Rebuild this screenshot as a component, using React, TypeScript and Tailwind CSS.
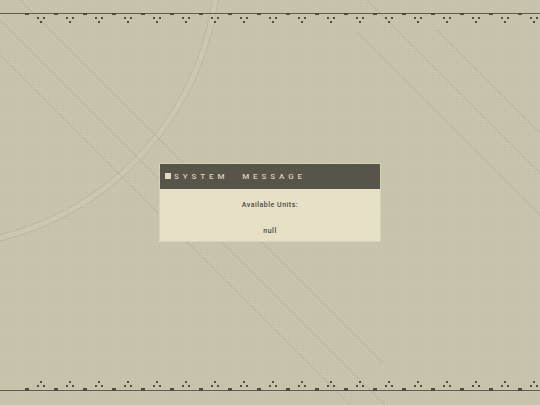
import React from "react";

const TILES = Array.from({ length: 19 }, (_, i) => 25 + i * 29);

function TopBorder() {
  return (
    <svg className="block w-[540px] h-[24px] shrink-0" viewBox="0 0 540 24">
      <rect x={0} y={13} width={540} height={1} fill="#5f5c51" />
      {TILES.map((x) => (
        <g key={x} fill="#4f4c43">
          <rect x={x} y={13} width={4} height={2} />
          <rect x={x + 12} y={17} width={2} height={2} />
          <rect x={x + 18} y={17} width={2} height={2} />
          <rect x={x + 15} y={21} width={2} height={2} />
        </g>
      ))}
    </svg>
  );
}

function BottomBorder() {
  return (
    <svg className="block w-[540px] h-[24px] shrink-0" viewBox="0 0 540 24">
      <rect x={0} y={9} width={540} height={1} fill="#5f5c51" />
      {TILES.map((x) => (
        <g key={x} fill="#4f4c43">
          <rect x={x} y={7} width={4} height={3} />
          <rect x={x + 15} y={0} width={2} height={2} />
          <rect x={x + 12} y={4} width={2} height={2} />
          <rect x={x + 18} y={4} width={2} height={2} />
        </g>
      ))}
    </svg>
  );
}

function Backdrop() {
  // faint arcs and diagonal strokes behind everything
  return (
    <svg className="absolute inset-0 w-[540px] h-[405px] pointer-events-none" viewBox="0 0 540 405">
      <g fill="none">
        <circle cx={-68} cy={-40} r={286} stroke="#d0ccb6" strokeWidth={5} opacity={0.35} />
        <circle cx={-68} cy={-40} r={283} stroke="#b3af96" strokeWidth={1} opacity={0.55} />
        <circle cx={-68} cy={-40} r={289} stroke="#b3af96" strokeWidth={1} opacity={0.55} />
      </g>
      <g stroke="#a9a58c" strokeWidth={1} opacity={0.5}>
        <line x1={20} y1={0} x2={383} y2={363} />
        <line x1={0} y1={20} x2={385} y2={405} />
        <line x1={0} y1={55} x2={350} y2={405} />
        <line x1={367} y1={0} x2={540} y2={173} />
        <line x1={357} y1={32} x2={540} y2={215} />
        <line x1={437} y1={30} x2={540} y2={133} />
      </g>
    </svg>
  );
}

export default function App() {
  return (
    <div
      className="relative w-[540px] h-[405px] overflow-hidden bg-[#c9c5ad] bg-[linear-gradient(rgba(0,0,0,0.012)_1px,transparent_1px),linear-gradient(90deg,rgba(0,0,0,0.012)_1px,transparent_1px)] bg-[size:3px_3px]"
      style={{ fontFamily: 'Roboto, "Liberation Sans", Arial, sans-serif' }}
    >
      <Backdrop />
      <div className="relative flex flex-col h-full">
        <TopBorder />
        <div className="flex-1 flex items-center justify-center">
          <div className="w-[222px] p-[1px] bg-[#d5d1bb] [transform:translateZ(0)]">
            <div className="h-[25px] bg-[#57544a] flex items-center pl-[5px]">
              <span className="w-[6px] h-[6px] bg-[#dcd8c3] mr-[3px] -mt-[1px]" />
              <span className="text-[8px] font-medium leading-none text-[#d6d1ba] tracking-[3.9px] [word-spacing:8px]">
                SYSTEM MESSAGE
              </span>
            </div>
            <div className="h-[52px] bg-[#e6e1c6] flex flex-col items-center text-[#4b4840] text-[7px] font-medium tracking-[0.5px] leading-none">
              <div className="mt-[13px]">Available Units:</div>
              <div className="mt-[19px]">null</div>
            </div>
          </div>
        </div>
        <BottomBorder />
      </div>
    </div>
  );
}
